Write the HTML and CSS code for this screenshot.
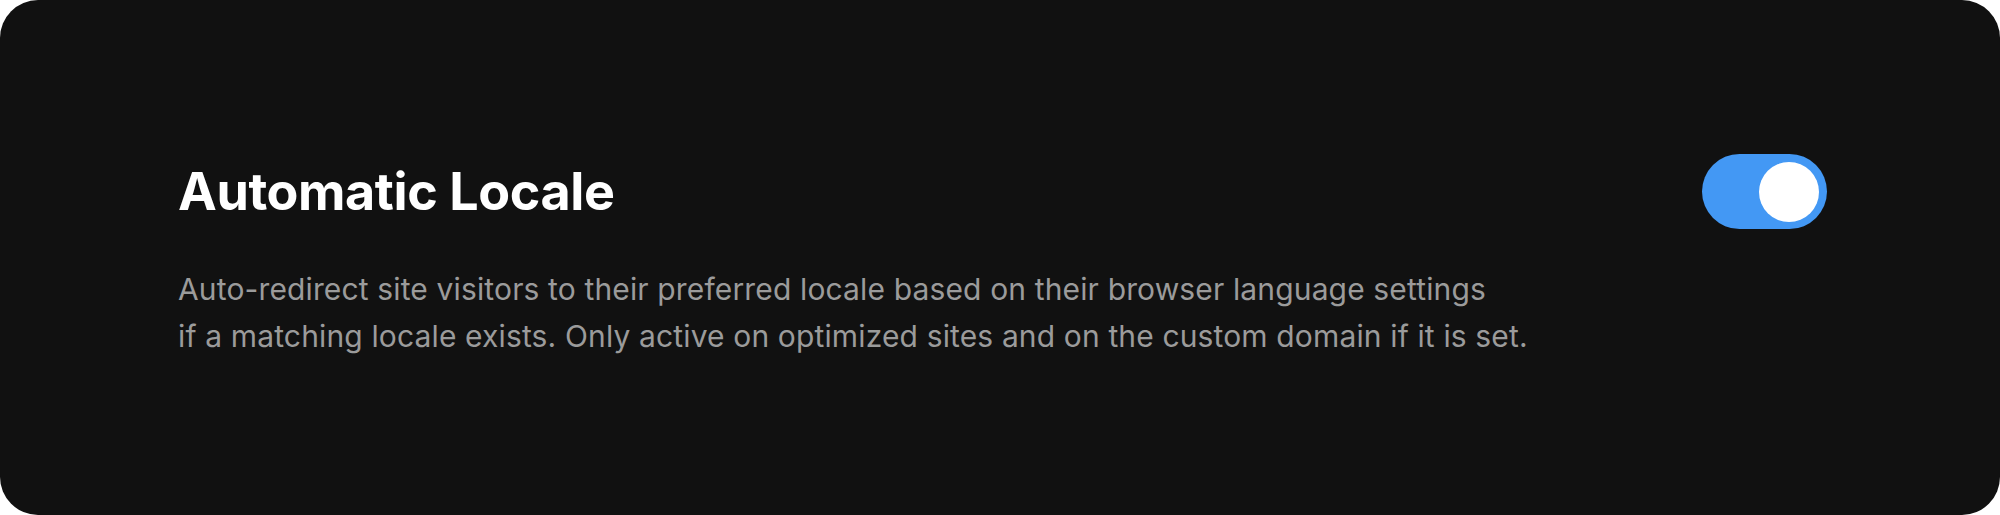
FILE: index.html
```html
<!DOCTYPE html>
<html lang="en">
<head>
    <meta charset="UTF-8">
    <title>Automatic Locale</title>
    <link rel="stylesheet" href="styles.css">
</head>
<body>
    <div class="card">
        <div class="row">
            <h1 class="title">Automatic Locale</h1>
            <button class="toggle on" aria-label="Automatic Locale"><span class="knob"></span></button>
        </div>
        <p class="desc">Auto-redirect site visitors to their preferred locale based on their browser language settings<br>if a matching locale exists. Only active on optimized sites and on the custom domain if it is set.</p>
    </div>
</body>
</html>
```

FILE: styles.css
```css
body {
    margin: 0;
    background-color: #ffffff;
    font-family: "Inter", "Noto Sans", sans-serif;
}

.card {
    box-sizing: border-box;
    width: 2000px;
    height: 515px;
    background-color: #111111;
    border-radius: 38px;
    padding: 154px 173px 0 178px;
}

.row {
    display: flex;
    align-items: center;
    justify-content: space-between;
    height: 75px;
}

.title {
    margin: 0;
    color: #ffffff;
    font-size: 52px;
    font-weight: 700;
    letter-spacing: -0.4px;
}

.toggle {
    box-sizing: border-box;
    width: 125px;
    height: 75px;
    border: none;
    border-radius: 40px;
    background-color: #4398f4;
    padding: 0 8px;
    display: flex;
    align-items: center;
    justify-content: flex-end;
    cursor: pointer;
}

.knob {
    width: 60px;
    height: 60px;
    border-radius: 50%;
    background-color: #ffffff;
}

.desc {
    margin: 37px 0 0 0;
    color: #9b9b9b;
    font-size: 30px;
    line-height: 47px;
    letter-spacing: 0.14px;
}
```
